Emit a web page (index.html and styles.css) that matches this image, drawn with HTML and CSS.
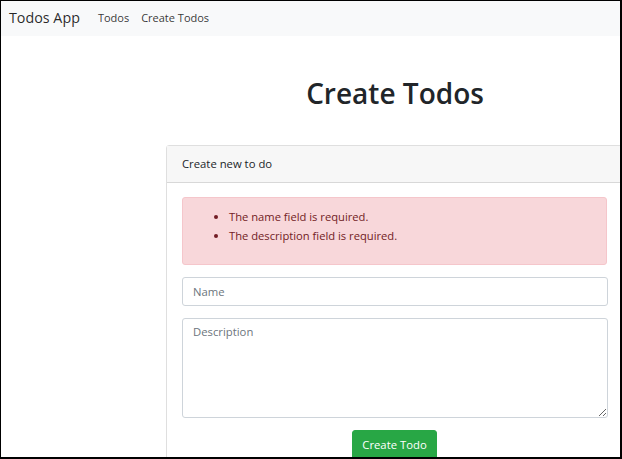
FILE: index.html
```html
<!DOCTYPE html>
<html lang="en">
<head>
<meta charset="utf-8">
<title>Todos App</title>
<link rel="stylesheet" href="styles.css">
</head>
<body>
<div class="frame">
  <nav class="navbar">
    <a class="brand" href="#">Todos App</a>
    <a class="nav-link" href="#">Todos</a>
    <a class="nav-link" href="#">Create Todos</a>
  </nav>
  <main class="main">
    <h1 class="title">Create Todos</h1>
    <div class="card">
      <div class="card-header">Create new to do</div>
      <div class="card-body">
        <div class="alert">
          <ul class="errors">
            <li>The name field is required.</li>
            <li>The description field is required.</li>
          </ul>
        </div>
        <input class="field" type="text" placeholder="Name">
        <textarea class="field area" placeholder="Description"></textarea>
        <div class="actions">
          <button class="btn" type="button">Create Todo</button>
        </div>
      </div>
    </div>
  </main>
</div>
</body>
</html>
```
FILE: styles.css
```css
* { box-sizing: border-box; }
html, body { margin: 0; padding: 0; background: #fff; }
body { font-family: "Open Sans", "Noto Sans", sans-serif; color: #212529; }
.frame {
  width: 622px;
  height: 459px;
  border-style: solid;
  border-color: #000;
  border-width: 1px 2px 2px 1px;
  overflow: hidden;
}
.navbar {
  display: flex;
  align-items: center;
  height: 35px;
  background: #f8f9fa;
  padding: 0 8px;
}
.brand {
  font-size: 14.3px;
  color: rgba(0,0,0,.85);
  text-decoration: none;
  margin-right: 18px;
  margin-top: -3px;
}
.nav-link {
  font-size: 11px;
  color: rgba(0,0,0,.8);
  text-decoration: none;
  margin-right: 12px;
  margin-top: -3px;
}
.main { padding-left: 165px; }
.title {
  margin: 40px 0 0 0;
  height: 69px;
  line-height: 35px;
  font-size: 28px;
  font-weight: 600;
  text-align: center;
  width: 458px;
  color: #212529;
}
.card {
  width: 458px;
  border: 1px solid rgba(0,0,0,.125);
  border-radius: 3px;
}
.card-header {
  height: 37px;
  background: #f7f7f7;
  border-bottom: 1px solid rgba(0,0,0,.125);
  padding: 0 16px 0 15px;
  font-size: 11.3px;
  line-height: 36px;
  color: #212529;
}
.card-body { padding: 14px 16px 0 15px; }
.alert {
  height: 68px;
  background: #f8d7da;
  border: 1px solid #f5c6cb;
  border-radius: 3px;
  color: #721c24;
  padding: 9px 16px;
  margin-bottom: 12px;
  font-size: 11.2px;
  line-height: 19px;
}
.errors { margin: 0; padding-left: 30px; }
.field {
  display: block;
  width: 426px;
  height: 29px;
  border: 1px solid #ced4da;
  border-radius: 3px;
  padding: 0 10px;
  font-family: inherit;
  font-size: 11.3px;
  color: #495057;
  margin: 0 0 12px 0;
  background: #fff;
}
.field::placeholder { color: #6c757d; }
.area {
  height: 100px;
  padding: 3px 10px;
  resize: vertical;
  line-height: 19px;
}
.actions { display: flex; justify-content: center; }
.btn {
  font-family: inherit;
  font-size: 11.3px;
  color: #fff;
  background: #28a745;
  border: 1px solid #28a745;
  border-radius: 3px;
  height: 30px;
  padding: 0 9px 2px;
}
```
